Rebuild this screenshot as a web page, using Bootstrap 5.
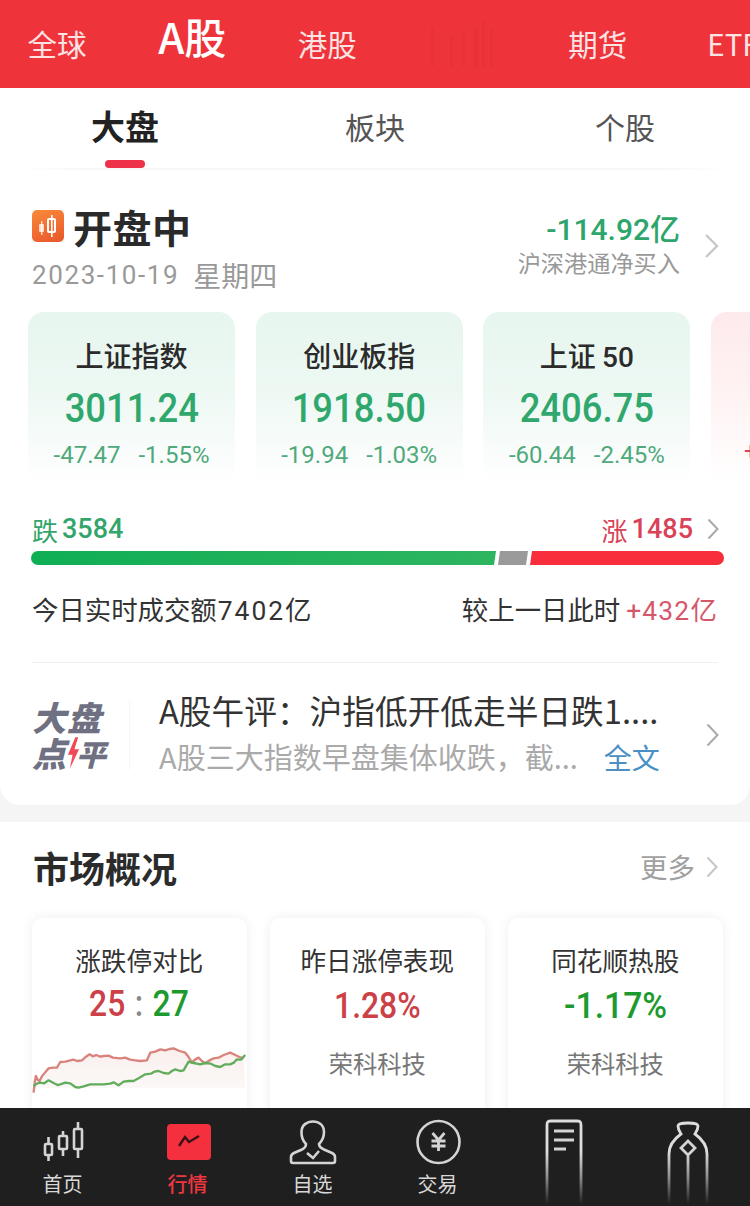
<!DOCTYPE html>
<html lang="zh-CN">
<head>
<meta charset="utf-8">
<title>行情</title>
<link href="https://cdn.jsdelivr.net/npm/bootstrap@5.3.0/dist/css/bootstrap.min.css" rel="stylesheet">
<style>
html,body{margin:0;height:1206px;overflow:hidden;background:#f5f5f5}
body{font-family:"Noto Sans CJK SC","Liberation Sans",sans-serif;color:#333}
.app{width:750px;height:1206px}
.scrollbox{height:1108px;overflow:hidden}
.num{font-family:Roboto,"Noto Sans CJK SC",sans-serif}
.sq{display:inline-block;transform:scaleX(.86)}
.sq91{display:inline-block;transform:scaleX(.91)}
.topbar{height:88px;background:#ef333b;color:#fbe3e3;font-size:29.5px;overflow:hidden;margin-left:-10.6px;width:770px}
.topitem{flex:0 0 135.2px;text-align:center;white-space:nowrap;line-height:86px}
.topitem.on{font-size:42px;font-weight:500;color:#fff;line-height:72px}
.fadeicon{opacity:.09}
.sheet{background:#fff;border-radius:0 0 20px 20px;height:717px}
.tabbar{height:80px;font-size:30px;color:#555}
.tabcell{flex:0 0 250px;height:80px;text-align:center;line-height:76px}
.tabcell.on{font-size:34px;font-weight:700;color:#222;position:relative}
.tabmark{position:absolute;left:105px;bottom:0;width:40px;height:8px;border-radius:4px;background:#ee3049}
.tabline{height:2px;margin:0 20px;background:linear-gradient(90deg,#fff,#f6f6f6 10%,#f6f6f6 90%,#fff)}
.headrow{padding:33px 32px 0;height:142px}
.sicon{width:32px;height:32px;border-radius:5px;background:linear-gradient(160deg,#f98a3a,#e9562a)}
.stitle{font-size:39px;font-weight:700;color:#2a2a2a;line-height:46px;letter-spacing:.5px;margin-left:9px}
.sdate{font-size:28px;color:#999;line-height:40px;margin-top:6px}
.sdigits{font-size:26px;letter-spacing:1.6px;margin-right:14px}
.flowbox{height:74px;margin-top:5px}
.flow1{font-size:30px;color:#2ea56b;line-height:34px;font-weight:500}
.flow2{font-size:23.2px;color:#999;line-height:30px;margin-top:0}
.chev{display:block;flex:none}
.chevhead{margin:2px -2px 0 24px}
.idxrow{padding-left:28px;gap:20.7px;overflow:hidden;height:170px;width:750px}
.idx{flex:0 0 207px;height:170px;border-radius:16px 16px 0 0;background:linear-gradient(#e7f6ef,#edf8f3 45%,#f8fcfa 80%,#fff);text-align:center;padding-top:22px}
.idx.up{background:linear-gradient(#fdeaec,#fff2f3 45%,#fffafa 80%,#fff)}
.idxname{font-size:28px;font-weight:500;line-height:42px;height:42px;color:#2b2b2b}
.idxval{font-size:40px;font-weight:500;color:#2fa76d;line-height:52px;margin-top:3px}
.idxchg{font-size:24px;color:#50a97b;line-height:36px;margin-top:2px;gap:18px}
.plusrow{padding-left:33px}
.breadth{height:48px;padding:4px 31px 0 32px;font-size:26px;margin-top:21px}
.bignum{font-size:27px;font-weight:500;margin-left:4px}
.down{color:#33a56c}.rise{color:#d94257}
.chevbreadth{margin-left:14px}
.bar{margin:0 26px 0 31px;height:14px;border-radius:7px;overflow:hidden;gap:2px}
.barg{flex:0 0 465px;background:linear-gradient(90deg,#0fae55,#2eb560);clip-path:polygon(0 0,100% 0,calc(100% - 2px) 100%,0 100%)}
.barn{flex:0 0 30px;background:#9a9a9a;clip-path:polygon(2px 0,100% 0,calc(100% - 2px) 100%,0 100%)}
.barr{flex:1;background:#f92e3c;clip-path:polygon(2px 0,100% 0,100% 100%,0 100%)}
.turn{padding:0 32px;height:76px;font-size:26.4px;color:#333;margin-top:7px}
.turn .spaced{letter-spacing:2px;margin-left:1px}
.turn .rise{color:#d5586a;letter-spacing:1.2px}
.rule{height:1px;background:#efefef;margin:14px 32px 0}
.newsrow{padding:0 32px;height:110px;margin-top:17px}
.logo{width:76px;font-size:34px;line-height:36px;font-weight:900;font-style:italic;color:#6f7183;white-space:nowrap;letter-spacing:1px}
.logo2{letter-spacing:0}
.bolt{margin:0 -4px 0 1px}
.ping{font-size:30px}
.vline{width:1px;height:70px;margin:0 29px 0 21px;background:#f6f6f6}
.newsbox{margin-bottom:4px;min-width:0}
.news1{font-size:32.7px;line-height:44px;color:#333;white-space:nowrap}
.news2{font-size:29px;line-height:44px;margin-top:2px;color:#aaa;white-space:nowrap}
.more{color:#4a8fc6;margin-left:26px;font-size:28px}
.chevnews{margin:0 -1px 0 -3px}
.sheet2{background:#fff;margin-top:17px;height:500px}
.sechead{padding:0 32px 0 33px;height:90px}
.sectitle{font-size:36px;font-weight:700;color:#2b2b2b}
.secmore{font-size:27.5px;color:#a0a0a0;margin-right:11px}
.mkt{padding:0 28px 0 32px;gap:23.5px;margin-top:6px}
.mcard{flex:0 0 214.5px;height:230px;border-radius:10px;background:#fff;box-shadow:0 0 12px rgba(0,0,0,.07);text-align:center;padding-top:21px;overflow:hidden}
.mtitle{font-size:25.6px;line-height:42px;color:#333}
.mval{font-size:37px;line-height:46px;font-weight:500;margin-top:0}
.mval.low{margin-top:2px}
.red{color:#cc4048}.grn{color:#1d9a2e}
.colon{color:#888;margin:0 11px}
.msub{font-size:24.3px;color:#777;line-height:36px;margin-top:16px}
.mchart{display:block;width:214.5px;height:60px;margin-top:14px}
.tabnav{height:98px;background:#1f1f1f;color:#ddd;overflow:hidden}
.navcell{flex:0 0 125px;text-align:center;height:98px}
.navcell svg{display:block;margin:0 auto}
.navicon{margin-top:10px!important}
.navlabel{font-size:20px;line-height:30px;margin-top:-3px;color:#d8d8d8}
.navlabel.on{color:#f13642;font-weight:500}
</style>
</head>
<body>
<div class="app d-flex flex-column">
  <div class="scrollbox flex-shrink-0">
    <div class="topbar d-flex">
      <div class="topitem">全球</div>
      <div class="topitem on">A股</div>
      <div class="topitem">港股</div>
      <div class="topitem d-flex align-items-center justify-content-center">
        <svg class="fadeicon" width="70" height="50" viewBox="0 0 70 50" aria-hidden="true"><g fill="#b5222b"><rect x="3" y="8" width="3" height="40"/><rect x="22" y="16" width="3" height="32"/><rect x="34" y="14" width="3" height="34"/><rect x="46" y="8" width="4" height="40"/><rect x="54" y="2" width="3" height="46"/><rect x="62" y="10" width="3" height="38"/></g></svg>
      </div>
      <div class="topitem">期货</div>
      <div class="topitem">ETF</div>
    </div>
    <div class="sheet">
      <div class="tabbar d-flex">
        <div class="tabcell on">大盘<span class="tabmark"></span></div>
        <div class="tabcell">板块</div>
        <div class="tabcell">个股</div>
      </div>
      <div class="tabline"></div>
      <div class="headrow d-flex justify-content-between">
        <div>
          <div class="d-flex align-items-center">
            <div class="sicon d-flex align-items-center justify-content-center">
              <svg width="22" height="24" viewBox="0 0 22 24" aria-hidden="true"><rect x="2" y="10" width="5" height="8" rx="1" fill="#fff" opacity=".75"/><rect x="4" y="7" width="1.4" height="14" fill="#fff" opacity=".75"/><rect x="11" y="5" width="7" height="13" rx="1" fill="none" stroke="#fff" stroke-width="2"/><rect x="14" y="1" width="1.6" height="22" fill="#fff"/></svg>
            </div>
            <div class="stitle">开盘中</div>
          </div>
          <div class="sdate d-flex align-items-center"><span class="num sdigits">2023-10-19</span><span>星期四</span></div>
        </div>
        <div class="flowbox d-flex align-items-center">
          <div class="text-end">
            <div class="flow1 num">-114.92亿</div>
            <div class="flow2">沪深港通净买入</div>
          </div>
          <svg class="chev chevhead" width="16" height="26" viewBox="0 0 16 26"><path d="M2 2l11 11L2 24" fill="none" stroke="#c8c8c8" stroke-width="2.4"/></svg>
        </div>
      </div>
      <div class="idxrow d-flex">
        <div class="idx">
          <div class="idxname">上证指数</div>
          <div class="idxval"><span class="num sq91">3011.24</span></div>
          <div class="idxchg num d-flex justify-content-center"><span>-47.47</span><span>-1.55%</span></div>
        </div>
        <div class="idx">
          <div class="idxname">创业板指</div>
          <div class="idxval"><span class="num sq91">1918.50</span></div>
          <div class="idxchg num d-flex justify-content-center"><span>-19.94</span><span>-1.03%</span></div>
        </div>
        <div class="idx">
          <div class="idxname">上证 <span class="num">50</span></div>
          <div class="idxval"><span class="num sq91">2406.75</span></div>
          <div class="idxchg num d-flex justify-content-center"><span>-60.44</span><span>-2.45%</span></div>
        </div>
        <div class="idx up">
          <div class="idxname"></div>
          <div class="idxval">&nbsp;</div>
          <div class="idxchg num rise d-flex justify-content-start plusrow"><span>+</span></div>
        </div>
      </div>
      <div class="breadth d-flex justify-content-between align-items-center">
        <div class="down d-flex align-items-center">跌<span class="num bignum">3584</span></div>
        <div class="d-flex align-items-center rise">涨<span class="num bignum">1485</span>
          <svg class="chev chevbreadth" width="12" height="22" viewBox="0 0 12 22"><path d="M1.500 1.500l9 9.500-9 9.500" fill="none" stroke="#aaa" stroke-width="2"/></svg>
        </div>
      </div>
      <div class="bar d-flex">
        <div class="barg"></div><div class="barn"></div><div class="barr"></div>
      </div>
      <div class="turn d-flex justify-content-between align-items-center">
        <div>今日实时成交额<span class="num spaced">7402</span>亿</div>
        <div>较上一日此时 <span class="rise num">+432亿</span></div>
      </div>
      <div class="rule"></div>
      <div class="newsrow d-flex align-items-center">
        <div class="logo flex-shrink-0">
          <div>大盘</div>
          <div class="logo2 d-flex align-items-center">点<svg class="bolt flex-shrink-0" width="13" height="32" viewBox="0 0 14 34" aria-hidden="true"><path d="M9 0L1 19h5L3 34 13 13H8l4-13z" fill="#f24a55"/></svg><span class="ping">平</span></div>
        </div>
        <div class="vline flex-shrink-0"></div>
        <div class="newsbox flex-grow-1">
          <div class="news1">A股午评：沪指低开低走半日跌1....</div>
          <div class="news2">A股三大指数早盘集体收跌，截...<span class="more">全文</span></div>
        </div>
        <svg class="chev chevnews" width="13" height="24" viewBox="0 0 13 24"><path d="M1.500 1.500l10 10.500-10 10.500" fill="none" stroke="#aaa" stroke-width="2"/></svg>
      </div>
    </div>
    <div class="sheet2">
      <div class="sechead d-flex justify-content-between align-items-center">
        <div class="sectitle">市场概况</div>
        <div class="d-flex align-items-center"><span class="secmore">更多</span>
          <svg class="chev" width="12" height="22" viewBox="0 0 12 22"><path d="M1.500 1.500l9 9.500-9 9.500" fill="none" stroke="#c8c8c8" stroke-width="2.200"/></svg>
        </div>
      </div>
      <div class="mkt d-flex">
        <div class="mcard">
          <div class="mtitle">涨跌停对比</div>
          <div class="mval num"><span class="sq"><span class="red">25</span><span class="colon">:</span><span class="grn">27</span></span></div>
          <svg class="mchart" viewBox="36 30 642 180" aria-hidden="true">
            <defs><linearGradient id="fa" x1="0" y1="0" x2="0" y2="1"><stop offset="0" stop-color="#f7e4e2"/><stop offset="1" stop-color="#f8f6f3"/></linearGradient></defs>
            <path d="M40 185L47 135 58 150 85 112 110 110 120 93 150 88 185 88 208 70 250 75 300 82 345 88 380 88 390 65 420 55 460 52 495 65 515 95 535 80 555 97 580 82 630 65 670 82 675 172 40 172Z" fill="url(#fa)" opacity=".6"/>
            <polyline fill="none" stroke="#d8837c" stroke-width="7" stroke-linejoin="round" points="40,185 44,150 47,135 52,146 58,150 66,134 74,125 85,112 98,110 110,110 120,93 135,92 150,88 160,86 170,90 185,88 196,78 208,70 218,76 228,72 240,77 250,75 265,74 278,80 300,82 315,80 330,86 345,88 360,90 380,88 390,65 405,62 420,55 435,58 448,54 460,52 478,60 495,65 505,78 515,95 525,85 535,80 545,90 555,97 568,88 580,82 595,80 610,72 630,65 645,72 658,78 670,82"/>
            <polyline fill="none" stroke="#62ad5c" stroke-width="7" stroke-linejoin="round" points="40,165 50,158 60,155 72,157 85,148 100,156 112,162 120,160 135,155 150,157 165,168 175,170 190,166 210,160 230,160 250,160 270,158 280,154 295,163 310,152 325,150 340,150 355,142 375,130 392,128 402,122 415,120 430,126 445,128 455,120 465,115 480,120 490,118 498,104 505,92 520,96 540,100 555,96 572,98 585,105 600,108 615,100 630,100 642,94 650,85 662,86 675,72"/>
          </svg>
        </div>
        <div class="mcard">
          <div class="mtitle">昨日涨停表现</div>
          <div class="mval low num red"><span class="sq">1.28%</span></div>
          <div class="msub">荣科科技</div>
        </div>
        <div class="mcard">
          <div class="mtitle">同花顺热股</div>
          <div class="mval low num grn"><span class="sq91">-1.17%</span></div>
          <div class="msub">荣科科技</div>
        </div>
      </div>
    </div>
  </div>
  <nav class="tabnav d-flex">
    <div class="navcell">
      <svg class="navicon" width="60" height="54" viewBox="0 0 60 54" aria-hidden="true">
        <g fill="none" stroke="#d4d4d4" stroke-width="2.600"><rect x="12" y="26" width="7" height="11" rx="1"/><path d="M15.500 19v7M15.500 37v6"/><rect x="26" y="18" width="8" height="13" rx="1"/><path d="M30 13v5M30 31v7"/><rect x="41" y="11" width="8" height="20" rx="1"/><path d="M45 4v7M45 31v9"/></g>
      </svg>
      <div class="navlabel">首页</div>
    </div>
    <div class="navcell">
      <svg class="navicon" width="60" height="54" viewBox="0 0 60 54" aria-hidden="true">
        <rect x="9" y="6" width="44" height="36" rx="4" fill="#f5303e"/>
        <path d="M21 28l6-9 4 5 10-6" fill="none" stroke="#3a1114" stroke-width="2.400"/>
      </svg>
      <div class="navlabel on">行情</div>
    </div>
    <div class="navcell">
      <svg class="navicon" width="60" height="54" viewBox="0 0 60 54" aria-hidden="true">
        <path d="M24 26C19 21 19.500 15 19.500 14 19.500 7 25 3.500 31 3.500S42 7 42 14C42 16 42 21 37 26 37 29 39 30 42 31.500L50 35C52 36 53 37 53 39V43C53 44.500 52 45 51 45H11C10 45 9 44.500 9 43V39C9 37 10 36 12 35L20 31.500C23 30 24 29 24 26Z" fill="none" stroke="#d4d4d4" stroke-width="2.600" transform="translate(-1 0)"/>
        <path d="M24 35l6 5 6-7" fill="none" stroke="#d4d4d4" stroke-width="2.600"/>
      </svg>
      <div class="navlabel">自选</div>
    </div>
    <div class="navcell">
      <svg class="navicon" width="60" height="54" viewBox="0 0 60 54" aria-hidden="true">
        <circle cx="30.500" cy="24" r="21" fill="none" stroke="#d4d4d4" stroke-width="2.600"/>
        <path d="M24.500 15l6 7 6-7M23.500 23h14M23.500 28h14M30.500 22v11" fill="none" stroke="#d4d4d4" stroke-width="2.800"/>
      </svg>
      <div class="navlabel">交易</div>
    </div>
    <div class="navcell">
      <svg width="60" height="98" viewBox="0 0 60 98" aria-hidden="true">
        <defs><linearGradient id="fd" gradientUnits="userSpaceOnUse" x1="0" y1="44" x2="0" y2="96"><stop offset="0" stop-color="#ddd"/><stop offset=".5" stop-color="#8a8a8a"/><stop offset="1" stop-color="#1f1f1f"/></linearGradient></defs>
        <path d="M14 96V17c0-3 1-4 4-4h26c3 0 4 1 4 4v79" fill="none" stroke="url(#fd)" stroke-width="2.800"/>
        <path d="M21 23h20M21 32h20M21 41h12" fill="none" stroke="#d4d4d4" stroke-width="2.800"/>
      </svg>
    </div>
    <div class="navcell">
      <svg width="60" height="98" viewBox="0 0 60 98" aria-hidden="true">
        <path d="M11 96V46c0-9 5-15 12-20-2-3-3-5-3-8 0-3 6-3 10-3s10 0 10 3c0 3-1 5-3 8 7 5 12 11 12 20v50" fill="none" stroke="url(#fd)" stroke-width="2.800"/>
        <path d="M30 33l7 7-7 7-7-7z" fill="none" stroke="#d4d4d4" stroke-width="2.800"/>
        <path d="M30 48v48" stroke="url(#fd)" stroke-width="2.800" fill="none"/>
      </svg>
    </div>
  </nav>
</div>
</body>
</html>
